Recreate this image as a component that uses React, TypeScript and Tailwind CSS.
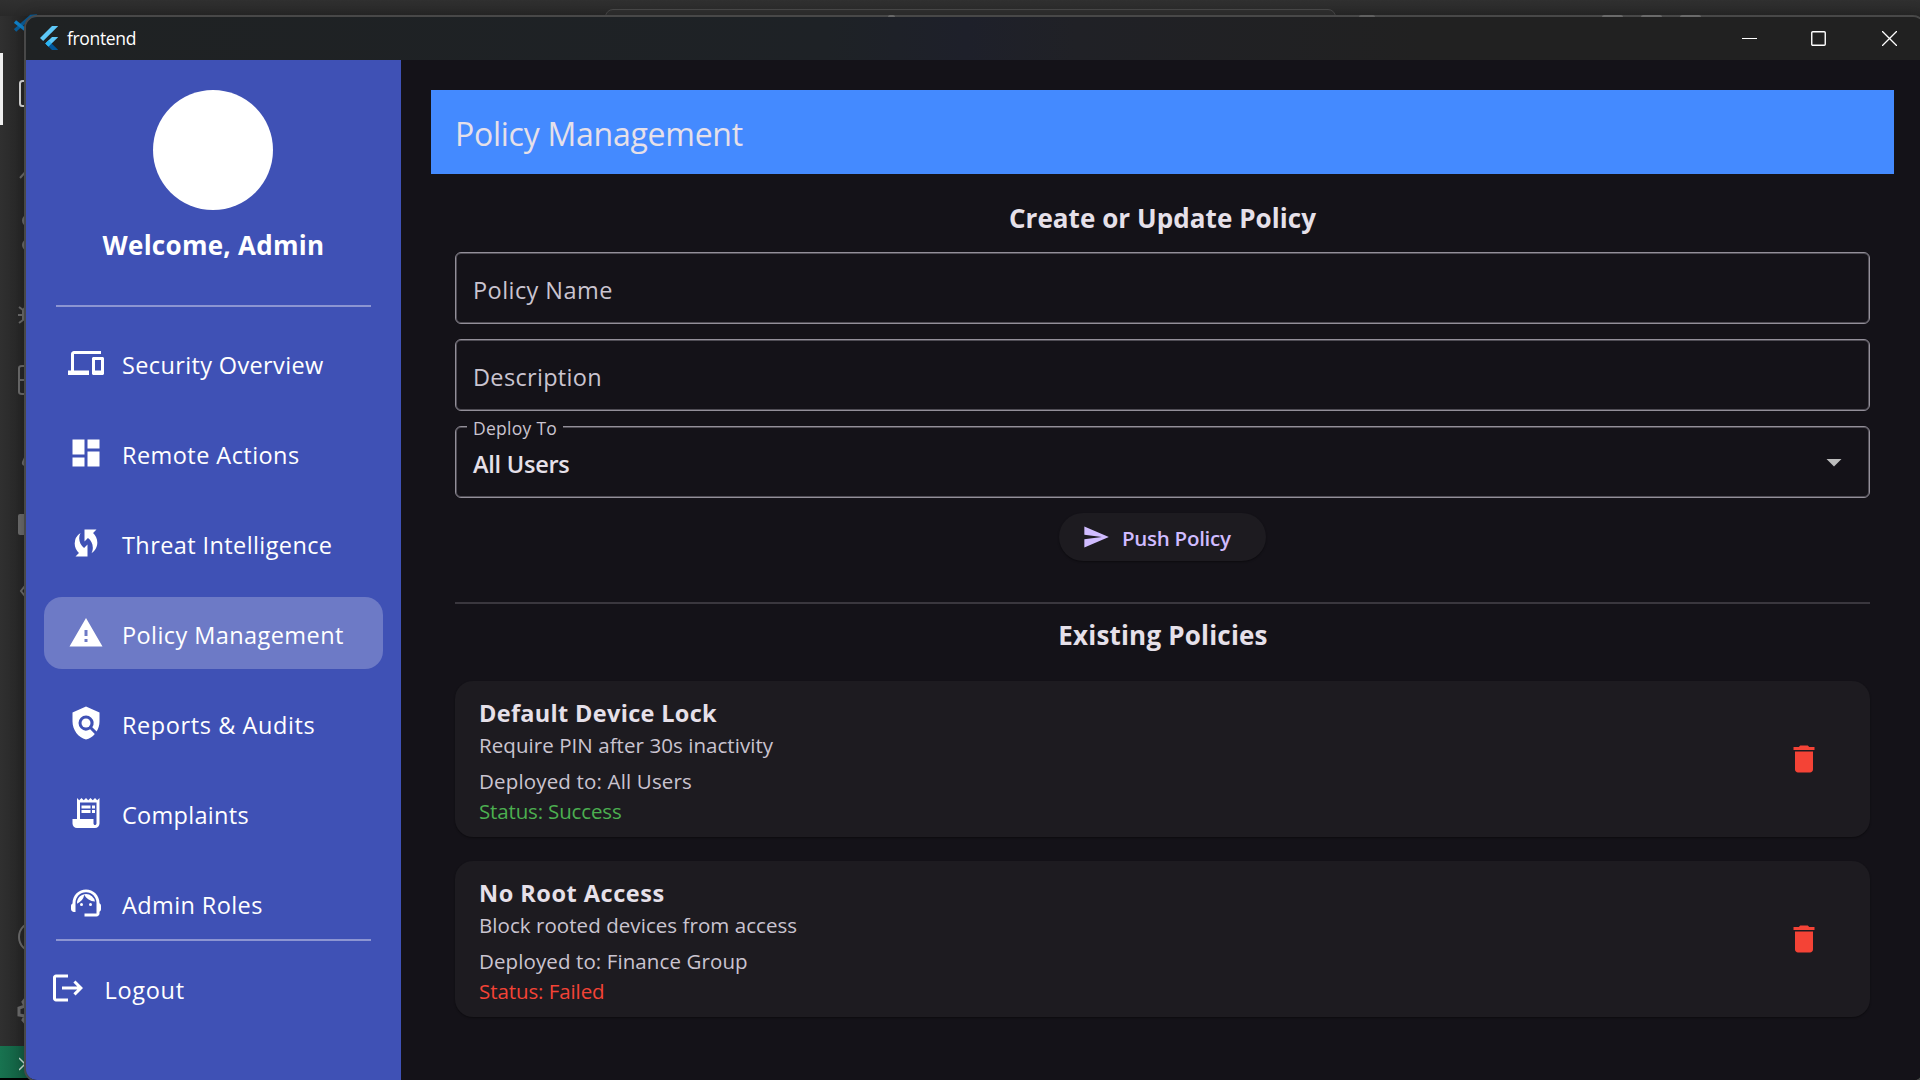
import React from "react";
import type { ReactNode } from "react";
import type { IconType } from "react-icons";
import {
  MdArrowDropDown,
  MdDashboard,
  MdDelete,
  MdDevices,
  MdLogout,
  MdPolicy,
  MdReceiptLong,
  MdSend,
  MdSupportAgent,
  MdWarning,
  MdWifiProtectedSetup,
} from "react-icons/md";

interface NavEntry {
  label: string;
  icon: IconType;
  tracking: string;
  active?: boolean;
}

const navEntries: NavEntry[] = [
  { label: "Security Overview", icon: MdDevices, tracking: "tracking-[0.36px]" },
  { label: "Remote Actions", icon: MdDashboard, tracking: "tracking-[0.44px]" },
  { label: "Threat Intelligence", icon: MdWifiProtectedSetup, tracking: "tracking-[0.4px]" },
  { label: "Policy Management", icon: MdWarning, tracking: "tracking-[0.42px]", active: true },
  { label: "Reports & Audits", icon: MdPolicy, tracking: "tracking-[0.58px]" },
  { label: "Complaints", icon: MdReceiptLong, tracking: "tracking-[0.3px]" },
  { label: "Admin Roles", icon: MdSupportAgent, tracking: "tracking-[0.4px]" },
];

interface Policy {
  name: string;
  nameTracking: string;
  description: string;
  descriptionTracking: string;
  target: string;
  targetTracking: string;
  status: string;
  statusClass: string;
}

const policies: Policy[] = [
  {
    name: "Default Device Lock",
    nameTracking: "tracking-[0.32px]",
    description: "Require PIN after 30s inactivity",
    descriptionTracking: "tracking-[0.06px]",
    target: "All Users",
    targetTracking: "tracking-[0.16px]",
    status: "Success",
    statusClass: "text-[#4caf50] tracking-[-0.15px]",
  },
  {
    name: "No Root Access",
    nameTracking: "tracking-[0.52px]",
    description: "Block rooted devices from access",
    descriptionTracking: "tracking-[0.06px]",
    target: "Finance Group",
    targetTracking: "tracking-[0.1px]",
    status: "Failed",
    statusClass: "text-[#f44336] tracking-[-0.08px]",
  },
];

function FlutterLogo() {
  return (
    <svg viewBox="0 0 18 24" className="h-6 w-[18px]">
      <path d="M12 0h6.2L3.2 15 0 12z" fill="#5ec8f8" />
      <path d="M12 11h6.2l-9.6 9.6-3.2-3.2z" fill="#5ec8f8" />
      <path d="M5.3 17.5 8.5 14.3l3.2 3.2-3.2 3.2z" fill="#29b6f6" />
      <path d="M8.5 20.7l3.2-3.2 6.5 6.5h-6.2z" fill="#01579b" />
    </svg>
  );
}

function RailIcon({ className, children }: { className: string; children: ReactNode }) {
  return (
    <svg
      viewBox="0 0 32 32"
      className={`ml-[18px] size-8 shrink-0 overflow-visible ${className}`}
      fill="none"
      stroke="currentColor"
      strokeWidth="2"
    >
      {children}
    </svg>
  );
}

/* The editor window that shows behind the left and top edges */
function EditorBackdrop() {
  return (
    <div className="flex h-[1080px] w-[1920px] flex-col bg-black">
      <div className="relative flex h-[1046px] flex-col bg-[linear-gradient(90deg,#303030_0px,#252525_26px)] text-[#6a6a6a]">
        <div className="absolute inset-x-0 top-0 h-4 bg-gradient-to-b from-[#303030] to-[#292929]" />
        <div className="absolute left-[605px] top-[9px] h-8 w-[731px] rounded-lg border border-[#4a4a4a] bg-[#303030]" />
        <svg viewBox="0 0 24 20" className="absolute left-[14px] top-[13px] h-5 w-6" fill="none" strokeWidth="3.500">
          <path d="M1 17.500 17 3.500l6-.5" stroke="#0a5c97" />
          <path d="M1 8.500 13 18" stroke="#0f80c8" />
        </svg>
        <div className="absolute left-0 top-[53px] h-[72px] w-[3px] bg-[#f0f0f0]" />
        <RailIcon className="mt-[78px] text-[#d8d8d8]">
          <rect x="2" y="3" width="20" height="25" rx="2.500" />
        </RailIcon>
        <RailIcon className="mt-[52px]">
          <path d="M2 16 11 6" />
        </RailIcon>
        <RailIcon className="mt-[26px]">
          <circle cx="10" cy="0.500" r="5" />
          <circle cx="10" cy="25" r="5" />
        </RailIcon>
        <RailIcon className="mt-[46px]">
          <path d="M1 9l4 3v10l-4 3M0 17h6M5 12q4-5 8-4" />
        </RailIcon>
        <RailIcon className="mt-[34px]">
          <path d="M1 4q0-2 3-2h20v28H4q-3 0-3-2zM1 16h20" />
        </RailIcon>
        <RailIcon className="mt-[52px]">
          <path d="M10 3 5 14q-1 3 3 3h10" />
        </RailIcon>
        <RailIcon className="mt-[30px]">
          <rect x="0" y="4" width="24" height="21" rx="2" fill="currentColor" stroke="none" />
        </RailIcon>
        <RailIcon className="mt-[34px]">
          <path d="M10 6 3 15l7 9" />
        </RailIcon>
        <RailIcon className="mt-[314px]">
          <circle cx="16" cy="15" r="15" />
        </RailIcon>
        <RailIcon className="mt-[40px]">
          <path strokeWidth="3" d="M9 3 5 8l2 4-6 2v7l6 1-2 4 5 6" />
        </RailIcon>
      </div>
      <div className="flex h-8 items-center bg-gradient-to-r from-[#187350] to-[#125c40] to-[26px] pt-1">
        <svg viewBox="0 0 12 14" className="ml-[19px] h-[14px] w-3" fill="none" stroke="#c3d9d0" strokeWidth="1.500">
          <path d="M0 1l6 6-6 6M12 1 6 7l6 6" />
        </svg>
      </div>
    </div>
  );
}

/* Tips of the editor's layout buttons, seen through the window's border */
function BorderMarks() {
  return (
    <div className="absolute inset-x-0 top-[15px] h-0.5">
      <div className="absolute left-[888px] h-full w-[7px] rounded-t bg-[#686868]" />
      <div className="absolute left-[1359px] h-full w-[16px] rounded-t bg-[#606060]" />
      <div className="absolute left-[1602px] h-full w-[21px] rounded-t bg-[#6a6a6a]" />
      <div className="absolute left-[1641px] h-full w-[21px] rounded-t bg-[#6a6a6a]" />
      <div className="absolute left-[1680px] h-full w-[21px] rounded-t bg-[#6a6a6a]" />
    </div>
  );
}

function TitleBar() {
  return (
    <header className="flex h-[43px] shrink-0 items-center bg-[linear-gradient(90deg,#1f2223_0px,#1e2226_800px,#1e202a_940px,#202126_1050px,#212121_1400px)] pb-px pl-3.5">
      <FlutterLogo />
      <span className="ml-[9px] pb-px text-[17.5px] leading-6 tracking-[-0.35px] text-white">frontend</span>
      <div className="ml-auto mr-[27px] flex items-center gap-[54px] text-white">
        <svg viewBox="0 0 15 15" className="size-[15px]">
          <path d="M0 7.500h15" stroke="currentColor" />
        </svg>
        <svg viewBox="0 0 15 15" className="size-[15px]">
          <rect x="0.750" y="0.750" width="13.500" height="13.500" rx="1" fill="none" stroke="currentColor" strokeWidth="1.400" />
        </svg>
        <svg viewBox="0 0 15 15" className="ml-0.5 size-[15px]">
          <path d="M0 0l15 15M15 0 0 15" stroke="currentColor" strokeWidth="1.300" />
        </svg>
      </div>
    </header>
  );
}

function Sidebar() {
  return (
    <aside className="flex w-[375px] shrink-0 flex-col bg-[#3f51b5] pt-[30px] text-white">
      <div className="ml-[127px] size-[120px] shrink-0 rounded-full bg-white" />
      <h2 className="mt-[17px] text-center text-[26px] font-bold leading-9 tracking-[0.28px]">Welcome, Admin</h2>
      <hr className="mx-[30px] mt-[42px] border-t-2 border-[#8c95d2]" />
      <nav className="mx-[18px] mt-5 flex flex-col gap-[18px]">
        {navEntries.map(({ label, icon: Icon, tracking, active }) => (
          <a
            key={label}
            className={`flex h-[72px] items-center rounded-[18px] pl-6 ${active ? "bg-[#6d7ac6]" : ""}`}
          >
            <Icon className="size-9" />
            <span className={`ml-[18px] pt-1 text-[23.5px] leading-8 ${tracking}`}>{label}</span>
          </a>
        ))}
      </nav>
      <hr className="mx-[30px] border-t-2 border-[#8c95d2]" />
      <a className="mt-[11px] flex h-[72px] items-center pl-6">
        <MdLogout className="size-9" />
        <span className="ml-[18.5px] pt-1 text-[23.5px] leading-8 tracking-[0.7px]">Logout</span>
      </a>
    </aside>
  );
}

function Field({ children }: { children: ReactNode }) {
  return (
    <div className="relative flex h-[72px] items-center rounded-md border border-[#938f99] pl-[17px] text-[23.5px] leading-8 text-[#cac4d0] shadow-[inset_0_0_0_1px_#4f4c54]">
      {children}
    </div>
  );
}

function PolicyCard({ policy }: { policy: Policy }) {
  return (
    <article className="flex h-[156px] items-center justify-between rounded-[18px] bg-[#1d1b20] pl-6 pr-12 shadow-[0_1px_2px_rgba(0,0,0,0.4)]">
      <div className="flex flex-col self-start pt-4 text-[20.5px] leading-7 text-[#cac4d0]">
        <h4 className={`text-[23.5px] font-bold leading-8 text-[#e6e0e9] ${policy.nameTracking}`}>{policy.name}</h4>
        <p className={`mt-0.5 ${policy.descriptionTracking}`}>{policy.description}</p>
        <p className={`mt-2 ${policy.targetTracking}`}>Deployed to: {policy.target}</p>
        <p className={`mt-0.5 ${policy.statusClass}`}>Status: {policy.status}</p>
      </div>
      <MdDelete className="size-9 text-[#f44336]" />
    </article>
  );
}

function PolicyPage() {
  return (
    <main className="flex flex-1 flex-col bg-[#141218] p-[30px] text-[#e6e0e9]">
      <div className="flex h-[84px] shrink-0 items-center bg-[#448aff] pl-6 pt-[3px]">
        <h1 className="text-[32px] leading-10 tracking-[-0.26px]">Policy Management</h1>
      </div>
      <section className="mx-6 flex flex-col">
        <h3 className="mt-[26px] text-center text-[26px] font-bold leading-9 tracking-[0.07px]">
          Create or Update Policy
        </h3>
        <div className="mt-4 flex flex-col gap-[15px]">
          <Field>
            <span className="pt-1 tracking-[0.44px]">Policy Name</span>
          </Field>
          <Field>
            <span className="pt-1 tracking-[0.32px]">Description</span>
          </Field>
          <Field>
            <span className="absolute -top-[11px] left-[11px] w-24 bg-[#141218] pl-1.5 text-[17.5px] leading-6 tracking-[0.28px]">
              Deploy To
            </span>
            <span className="pt-1 font-semibold tracking-[-0.25px] text-[#e6e0e9]">All Users</span>
            <MdArrowDropDown className="ml-auto mr-[17px] size-9 text-[#bdbdbd]" />
          </Field>
        </div>
        <button className="mt-[15px] flex h-12 w-[207px] items-center self-center rounded-full bg-[#1d1b20] pl-[23px] text-[#d0bcff] shadow-[0_1px_2px_rgba(0,0,0,0.4)]">
          <MdSend className="size-7" />
          <span className="ml-3 pt-0.5 text-[20.5px] font-semibold leading-7 tracking-[-0.27px]">Push Policy</span>
        </button>
        <hr className="mt-[41px] border-t-2 border-[#3a373e]" />
        <h3 className="mt-[13px] pl-px text-center text-[26px] font-bold leading-9 tracking-[0.2px]">Existing Policies</h3>
        <div className="mt-7 flex flex-col gap-6">
          {policies.map((policy) => (
            <PolicyCard key={policy.name} policy={policy} />
          ))}
        </div>
      </section>
    </main>
  );
}

export default function App() {
  return (
    <div className="relative h-[1080px] w-[1920px] overflow-hidden font-['Open_Sans',sans-serif]">
      <EditorBackdrop />
      <div className="absolute left-6 top-[15px] flex h-[1067px] w-[1902px] flex-col overflow-hidden rounded-[13px] border-2 border-[#484848] shadow-[0_0_14px_rgba(0,0,0,0.25)]">
        <TitleBar />
        <div className="flex flex-1">
          <Sidebar />
          <PolicyPage />
        </div>
      </div>
      <BorderMarks />
    </div>
  );
}
